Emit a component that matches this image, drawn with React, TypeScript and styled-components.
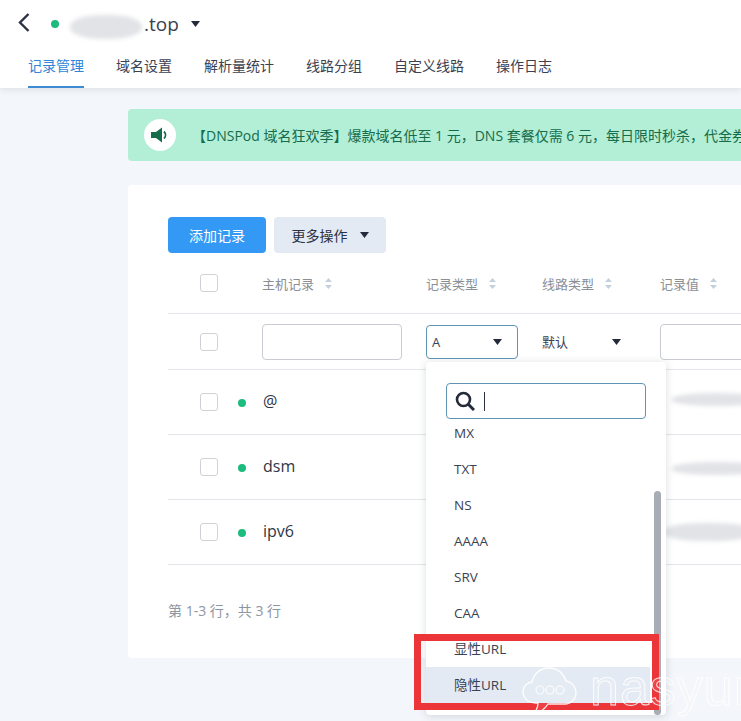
import React from "react";
import styled, { createGlobalStyle } from "styled-components";

const Global = createGlobalStyle`
  html, body { margin: 0; padding: 0; width: 741px; height: 721px; overflow: hidden; background: #f3f6fa; }
  * { box-sizing: border-box; }
  body { font-family: "Open Sans", "Noto Sans CJK SC", "Noto Sans", sans-serif; color: #2b3243; }
`;

const Page = styled.div`
  position: relative;
  width: 741px;
  height: 721px;
  overflow: hidden;
  background: #f3f6fa;
`;

const Header = styled.header`
  height: 88px;
  background: #fff;
  padding: 0 0 0 28px;
  box-shadow: 0 2px 6px rgba(40, 60, 90, 0.1);
  display: flex;
  flex-direction: column;
`;

const TitleRow = styled.div`
  height: 48px;
  display: flex;
  align-items: center;
  margin-left: -11px;
`;

const Back = styled.svg`
  width: 14px;
  height: 20px;
  margin-right: 20px;
  margin-top: -4px;
`;

const Dot = styled.span`
  display: block;
  flex: none;
  width: 8px;
  height: 8px;
  border-radius: 50%;
  background: #1dbb7d;
`;

const Domain = styled.div`
  margin-left: 85px;
  font-size: 19px;
  line-height: 24px;
  margin-top: -1px;
  color: #3a4252;
`;

const Caret = styled.svg<{ $m?: number }>`
  display: block;
  flex: none;
  width: 9px;
  height: 6px;
  margin-left: ${(p) => p.$m ?? 0}px;
`;

const Tabs = styled.nav`
  display: flex;
  gap: 32px;
  height: 40px;
`;

const Tab = styled.div<{ $active?: boolean }>`
  font-size: 14px;
  line-height: 36px;
  height: 40px;
  color: ${(p) => (p.$active ? "#2f86d6" : "#3a4252")};
  border-bottom: 2px solid ${(p) => (p.$active ? "#3f8bd2" : "transparent")};
`;

const Main = styled.main`
  padding: 21px 0 0 128px;
  width: 1100px;
`;

const Banner = styled.div`
  height: 52px;
  background: #b3eed6;
  border-radius: 4px;
  display: flex;
  align-items: center;
  padding-left: 16px;
  color: #146c4b;
  font-size: 14px;
  white-space: nowrap;
`;

const SpeakerWrap = styled.div`
  width: 32px;
  height: 32px;
  border-radius: 50%;
  background: #fff;
  display: flex;
  align-items: center;
  justify-content: center;
  margin-right: 16px;
`;

const Card = styled.section`
  margin-top: 24px;
  height: 473px;
  background: #fff;
  border-radius: 4px;
  padding: 32px 40px;
`;

const Toolbar = styled.div`
  display: flex;
  gap: 8px;
`;

const PrimaryButton = styled.div`
  width: 98px;
  height: 36px;
  border-radius: 4px;
  background: #3399f5;
  color: #fff;
  font-size: 14px;
  display: flex;
  align-items: center;
  justify-content: center;
`;

const MoreButton = styled.div`
  width: 112px;
  height: 36px;
  border-radius: 4px;
  background: #e4eaf3;
  color: #2b3243;
  font-size: 14px;
  display: flex;
  align-items: center;
  justify-content: center;
  gap: 12px;
`;

const Row = styled.div<{ $h: number }>`
  display: grid;
  grid-template-columns: 94px 164px 116px 118px 1fr;
  align-items: center;
  height: ${(p) => p.$h}px;
  border-bottom: 1px solid #e3e6ea;
`;

const CheckCell = styled.div`
  display: flex;
  align-items: center;
  padding-left: 32px;
`;

const Check = styled.span`
  display: block;
  flex: none;
  width: 18px;
  height: 18px;
  border: 1px solid #cfd2d6;
  border-radius: 3px;
  background: #fff;
`;

const RowDot = styled(Dot)`
  margin-left: 20px;
  margin-top: 2px;
`;

const HeadCell = styled.div`
  display: flex;
  align-items: center;
  gap: 11px;
  font-size: 13px;
  color: #8a8e95;
`;

const Sort = styled.svg`
  width: 7px;
  height: 11px;
`;

const Input = styled.div`
  width: 140px;
  height: 36px;
  border: 1px solid #c8ccd2;
  border-radius: 4px;
  background: #fff;
`;

const WideInput = styled(Input)`
  width: 200px;
`;

const Select = styled.div`
  width: 92px;
  height: 34px;
  border: 1px solid #5f94b5;
  border-radius: 4px;
  display: flex;
  align-items: center;
  justify-content: space-between;
  padding: 0 15px 0 5px;
  font-size: 13px;
  color: #3a4252;
`;

const LineSelect = styled.div`
  width: 79px;
  display: flex;
  align-items: center;
  justify-content: space-between;
  font-size: 13px;
  color: #3a4252;
`;

const Host = styled.div`
  font-size: 16px;
  margin-left: 1px;
  margin-top: -3px;
  color: #2f3647;
`;

const Footer = styled.div`
  margin-top: 36px;
  font-size: 14px;
  line-height: 20px;
  color: #8d96a3;
`;

const Dropdown = styled.div`
  position: absolute;
  left: 426px;
  top: 362px;
  width: 240px;
  height: 353px;
  background: #fff;
  border-radius: 4px;
  box-shadow: 0 1px 8px rgba(50, 60, 80, 0.18);
  overflow: hidden;
`;

const SearchBox = styled.div`
  position: absolute;
  left: 20px;
  top: 21px;
  width: 200px;
  height: 36px;
  border: 1px solid #5f94b5;
  border-radius: 4px;
  background: #fff;
  display: flex;
  align-items: center;
  padding-left: 8px;
  gap: 9px;
`;

const Cursor = styled.span`
  width: 1px;
  height: 19px;
  background: #2b3243;
`;

const Options = styled.ul`
  list-style: none;
  margin: 0;
  padding: 0;
  position: absolute;
  top: 53px;
  left: 0;
  width: 224px;
`;

const Option = styled.li<{ $hover?: boolean }>`
  height: 36px;
  padding-left: 28px;
  font-size: 13.5px;
  line-height: 36px;
  color: #3a4252;
  background: ${(p) => (p.$hover ? "#e4eaf3" : "transparent")};
`;

const ScrollThumb = styled.div`
  position: absolute;
  left: 228px;
  top: 129px;
  width: 7px;
  height: 224px;
  border-radius: 4px;
  background: #a8acb5;
`;

const RedFrame = styled.div`
  position: absolute;
  left: 414px;
  top: 634px;
  width: 245px;
  height: 76px;
  border: 7px solid #ec3538;
`;

const Smudge = styled.div<{ $x: number; $y: number; $w: number; $h: number }>`
  position: absolute;
  left: ${(p) => p.$x}px;
  top: ${(p) => p.$y}px;
  width: ${(p) => p.$w}px;
  height: ${(p) => p.$h}px;
  background: #e2e3e7;
  border-radius: 45%;
  filter: blur(2px);
`;

const Watermark = styled.div`
  position: absolute;
  left: 522px;
  top: 666px;
  display: flex;
  align-items: center;
  gap: 12px;
  pointer-events: none;
`;

const WatermarkText = styled.span`
  font-family: "Liberation Sans", sans-serif;
  font-size: 52px;
  line-height: 52px;
  margin-top: -8px;
  letter-spacing: 1px;
  color: rgba(255, 255, 255, 0.08);
  -webkit-text-stroke: 1px rgba(255, 255, 255, 0.85);
`;

const SortIcon = () => (
  <Sort viewBox="0 0 7 11">
    <path d="M3.5 0 7 4H0z" fill="#c4d0dc" />
    <path d="M3.5 11 0 7h7z" fill="#c4d0dc" />
  </Sort>
);

const Tri = ({ m }: { m?: number }) => (
  <Caret $m={m} viewBox="0 0 9 6">
    <path d="M0 0h9L4.5 6z" fill="#232a3a" />
  </Caret>
);

const Head = ({ children }: { children: string }) => (
  <HeadCell>
    {children}
    <SortIcon />
  </HeadCell>
);

const hosts = ["@", "dsm", "ipv6"];
const options = ["MX", "TXT", "NS", "AAAA", "SRV", "CAA", "显性URL", "隐性URL"];
const tabs = ["记录管理", "域名设置", "解析量统计", "线路分组", "自定义线路", "操作日志"];

export default function App() {
  return (
    <Page>
      <Global />
      <Header>
        <TitleRow>
          <Back viewBox="0 0 14 20">
            <path d="M11.5 2 3 10.5 11.5 19" fill="none" stroke="#2b3243" strokeWidth="2.4" />
          </Back>
          <Dot />
          <Domain>.top</Domain>
          <Tri m={12} />
        </TitleRow>
        <Tabs>
          {tabs.map((t, i) => (
            <Tab key={t} $active={i === 0}>
              {t}
            </Tab>
          ))}
        </Tabs>
      </Header>
      <Main>
        <Banner>
          <SpeakerWrap>
            <svg width="18" height="16" viewBox="0 0 18 16">
              <path d="M0 5h5l6-4.5v15L5 11H0z" fill="#146c4b" />
              <path d="M13 4.5c2 2 2 5 0 7" fill="none" stroke="#146c4b" strokeWidth="1.8" />
            </svg>
          </SpeakerWrap>
          【DNSPod 域名狂欢季】爆款域名低至 1 元，DNS 套餐仅需 6 元，每日限时秒杀，代金券
        </Banner>
        <Card>
          <Toolbar>
            <PrimaryButton>添加记录</PrimaryButton>
            <MoreButton>
              更多操作
              <Tri />
            </MoreButton>
          </Toolbar>
          <Row $h={61}>
            <CheckCell>
              <Check />
            </CheckCell>
            <Head>主机记录</Head>
            <Head>记录类型</Head>
            <Head>线路类型</Head>
            <Head>记录值</Head>
          </Row>
          <Row $h={56}>
            <CheckCell>
              <Check />
            </CheckCell>
            <Input />
            <Select>
              A
              <Tri />
            </Select>
            <LineSelect>
              默认
              <Tri />
            </LineSelect>
            <WideInput />
          </Row>
          {hosts.map((h) => (
            <Row $h={65} key={h}>
              <CheckCell>
                <Check />
                <RowDot />
              </CheckCell>
              <Host>{h}</Host>
            </Row>
          ))}
          <Footer>第 1-3 行，共 3 行</Footer>
        </Card>
      </Main>

      <Smudge $x={70} $y={15} $w={72} $h={24} />
      <Smudge $x={672} $y={393} $w={90} $h={13} />
      <Smudge $x={672} $y={462} $w={90} $h={13} />
      <Smudge $x={664} $y={523} $w={90} $h={18} />

      <Dropdown>
        <Options>
          {options.map((o) => (
            <Option key={o} $hover={o === "隐性URL"}>
              {o}
            </Option>
          ))}
        </Options>
        <SearchBox>
          <svg width="20" height="20" viewBox="0 0 20 20">
            <circle cx="8.5" cy="8.5" r="6.5" fill="none" stroke="#232a3a" strokeWidth="2.6" />
            <path d="M13.5 13.5 19 19" stroke="#232a3a" strokeWidth="3" />
          </svg>
          <Cursor />
        </SearchBox>
        <ScrollThumb />
      </Dropdown>
      <RedFrame />
      <Watermark>
        <svg width="56" height="50" viewBox="0 0 56 50">
          <path
            d="M14 37C5 37 1 31 1 26c0-6 5-10 9-10C12 7 19 2 27 2c9 0 15 6 17 13 6 1 10 6 10 12 0 6-5 11-11 11H26c-3 5-8 9-15 10 3-3 5-7 5-11z"
            fill="rgba(255,255,255,0.06)"
            stroke="rgba(255,255,255,0.9)"
            strokeWidth="1.3"
          />
          <circle cx="18" cy="24" r="4" fill="none" stroke="rgba(255,255,255,0.9)" strokeWidth="1.1" />
          <circle cx="28" cy="24" r="4" fill="none" stroke="rgba(255,255,255,0.9)" strokeWidth="1.1" />
          <circle cx="38" cy="24" r="4" fill="none" stroke="rgba(255,255,255,0.9)" strokeWidth="1.1" />
        </svg>
        <WatermarkText>nasyun</WatermarkText>
      </Watermark>
    </Page>
  );
}
